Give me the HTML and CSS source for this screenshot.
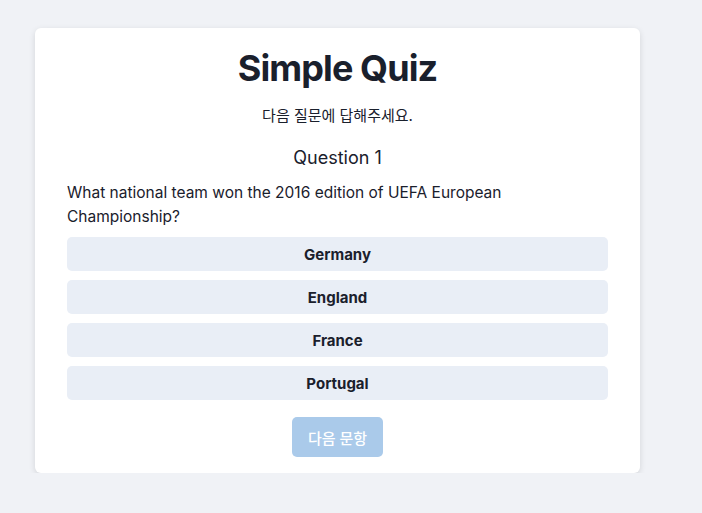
FILE: index.html
```html
<!DOCTYPE html>
<html lang="ko">
<head>
<meta charset="utf-8">
<link rel="stylesheet" href="styles.css">
</head>
<body>
<div class="card">
  <h1 class="title">Simple Quiz</h1>
  <p class="subtitle">다음 질문에 답해주세요.</p>
  <h2 class="qnum">Question 1</h2>
  <p class="question">What national team won the 2016 edition of UEFA European Championship?</p>
  <div class="options">
    <button class="option">Germany</button>
    <button class="option">England</button>
    <button class="option">France</button>
    <button class="option">Portugal</button>
  </div>
  <div class="actions">
    <button class="next" disabled>다음 문항</button>
  </div>
</div>
</body>
</html>
```
FILE: styles.css
```css
html, body {
  margin: 0;
  padding: 0;
}
body {
  background: #f0f2f6;
  font-family: Inter, "Noto Sans CJK KR", sans-serif;
  color: #1a202c;
  padding-top: 28px;
}
.card {
  box-sizing: border-box;
  width: 605px;
  margin-left: 35px;
  background: #fff;
  border-radius: 6px;
  box-shadow: 0 2px 6px rgba(0,0,0,0.12);
  padding: 16px 32px 16px;
}
.title {
  margin: 0;
  text-align: center;
  font-size: 36px;
  font-weight: 700;
  letter-spacing: -0.9px;
  line-height: 48px;
}
.subtitle {
  margin: 14px 0 0;
  text-align: center;
  font-size: 15px;
  line-height: 20px;
}
.qnum {
  margin: 20px 0 0;
  text-align: center;
  font-size: 18px;
  font-weight: 400;
  line-height: 24px;
}
.question {
  margin: 11px 0 0;
  font-size: 15.5px;
  line-height: 24px;
}
.options {
  display: flex;
  flex-direction: column;
  gap: 9px;
  margin-top: 8px;
}
.option {
  height: 34px;
  border: none;
  border-radius: 5px;
  background: #e9eef6;
  font-family: inherit;
  font-size: 15px;
  font-weight: 700;
  color: #1a202c;
}
.actions {
  display: flex;
  justify-content: center;
  margin-top: 17px;
}
.next {
  width: 91px;
  height: 40px;
  border: none;
  border-radius: 5px;
  background: #aacaea;
  color: #fff;
  font-family: inherit;
  font-size: 15px;
  font-weight: 500;
}
```
